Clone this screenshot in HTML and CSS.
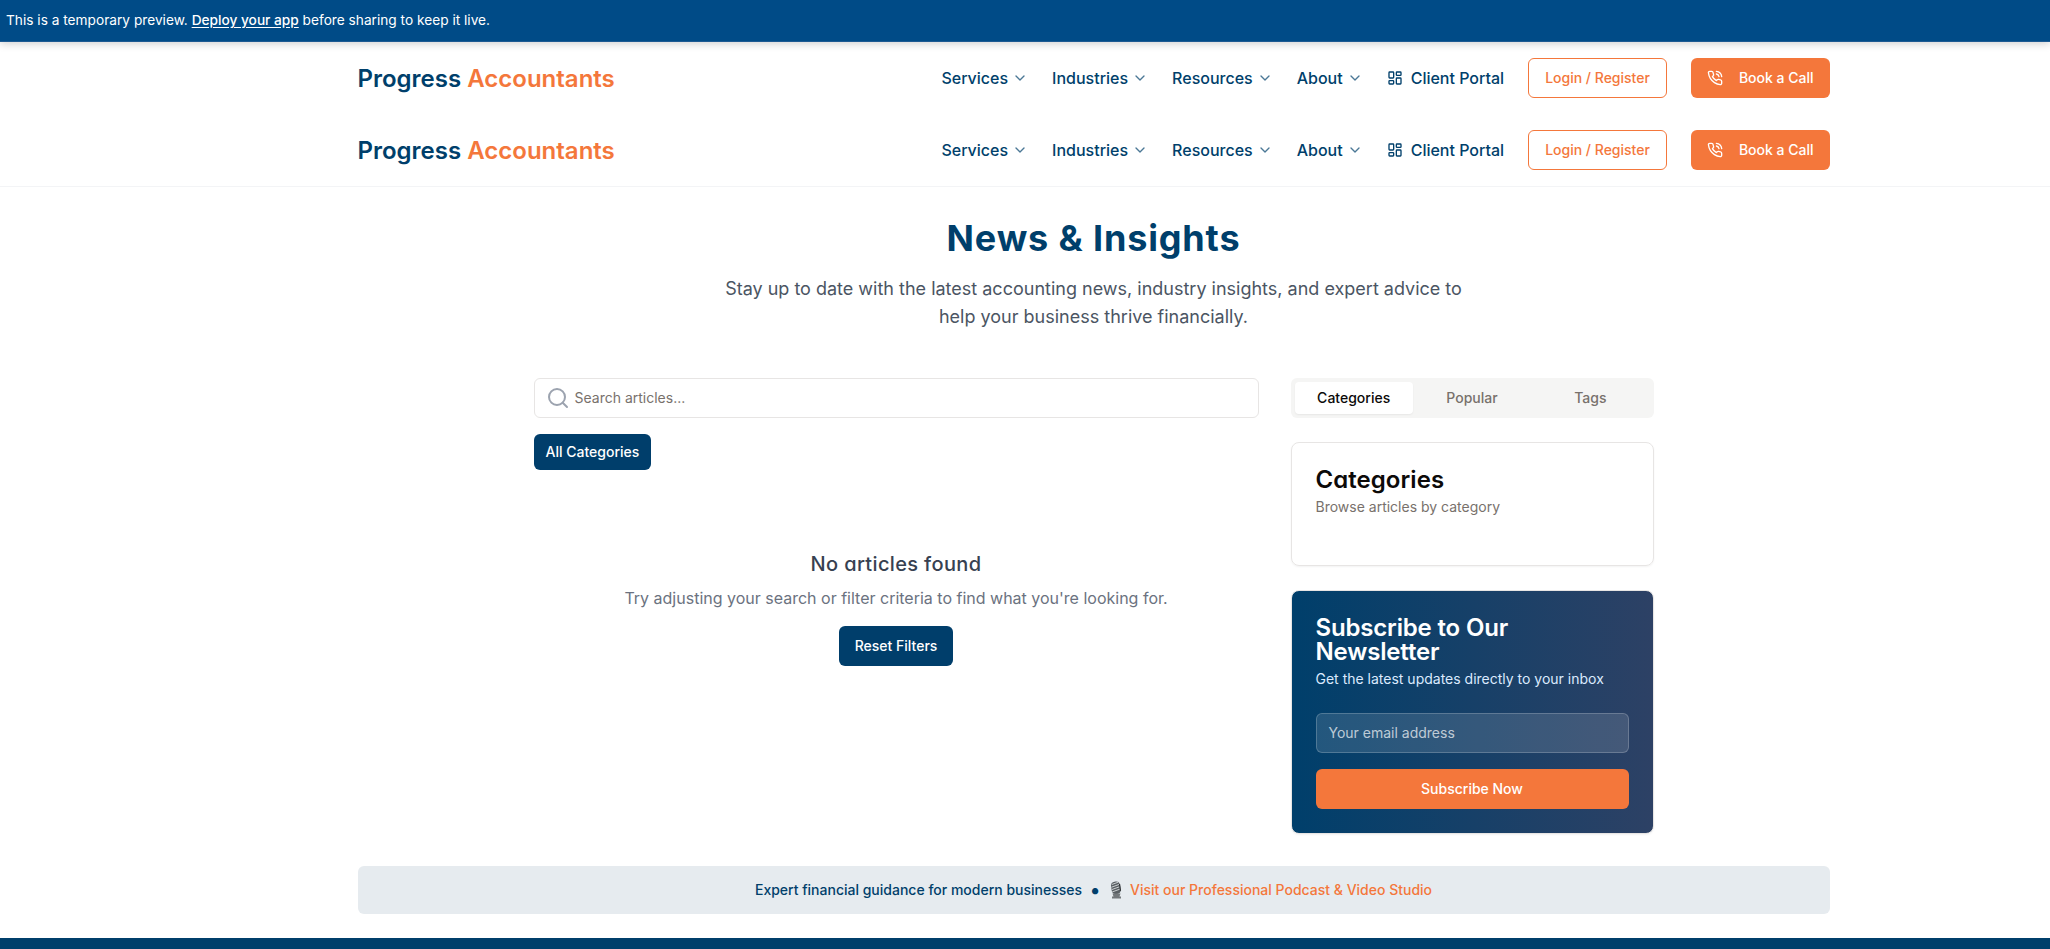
FILE: index.html
```html
<!DOCTYPE html>
<html lang="en">
<head>
<meta charset="utf-8">
<title>News &amp; Insights | Progress Accountants</title>
<link rel="stylesheet" href="styles.css">
</head>
<body>
<svg class="defs" width="0" height="0">
  <symbol id="chevron" viewBox="0 0 24 24"><path d="m6 9 6 6 6-6"/></symbol>
  <symbol id="dashboard" viewBox="0 0 24 24"><rect width="7" height="9" x="3" y="3" rx="1"/><rect width="7" height="5" x="14" y="3" rx="1"/><rect width="7" height="9" x="14" y="12" rx="1"/><rect width="7" height="5" x="3" y="16" rx="1"/></symbol>
  <symbol id="phone" viewBox="0 0 24 24"><path d="M22 16.92v3a2 2 0 0 1-2.18 2 19.79 19.79 0 0 1-8.63-3.07 19.5 19.5 0 0 1-6-6 19.79 19.79 0 0 1-3.07-8.67A2 2 0 0 1 4.11 2h3a2 2 0 0 1 2 1.72 12.84 12.84 0 0 0 .7 2.81 2 2 0 0 1-.45 2.11L8.09 9.91a16 16 0 0 0 6 6l1.27-1.27a2 2 0 0 1 2.11-.45 12.84 12.84 0 0 0 2.81.7A2 2 0 0 1 22 16.92z"/><path d="M14.05 2a9 9 0 0 1 8 7.94"/><path d="M14.05 6A5 5 0 0 1 18 10"/></symbol>
</svg>

<div class="banner">This is a temporary preview.&nbsp;<a>Deploy your app</a>&nbsp;before sharing to keep it live.</div>

<div class="page">
  <header class="header">
    <div class="bar">
      <div class="logo">Progress <span>Accountants</span></div>
      <nav class="nav">
        <a class="nav-item">Services<svg class="icon chev"><use href="#chevron"/></svg></a>
        <a class="nav-item">Industries<svg class="icon chev"><use href="#chevron"/></svg></a>
        <a class="nav-item">Resources<svg class="icon chev"><use href="#chevron"/></svg></a>
        <a class="nav-item">About<svg class="icon chev"><use href="#chevron"/></svg></a>
        <a class="nav-item portal"><svg class="icon"><use href="#dashboard"/></svg>Client Portal</a>
        <a class="btn outline">Login / Register</a>
        <a class="btn orange call"><svg class="icon"><use href="#phone"/></svg>Book a Call</a>
      </nav>
    </div>
  </header>
  <header class="header ruled">
    <div class="bar">
      <div class="logo">Progress <span>Accountants</span></div>
      <nav class="nav">
        <a class="nav-item">Services<svg class="icon chev"><use href="#chevron"/></svg></a>
        <a class="nav-item">Industries<svg class="icon chev"><use href="#chevron"/></svg></a>
        <a class="nav-item">Resources<svg class="icon chev"><use href="#chevron"/></svg></a>
        <a class="nav-item">About<svg class="icon chev"><use href="#chevron"/></svg></a>
        <a class="nav-item portal"><svg class="icon"><use href="#dashboard"/></svg>Client Portal</a>
        <a class="btn outline">Login / Register</a>
        <a class="btn orange call"><svg class="icon"><use href="#phone"/></svg>Book a Call</a>
      </nav>
    </div>
  </header>

  <section class="intro">
    <h1>News &amp; Insights</h1>
    <p>Stay up to date with the latest accounting news, industry insights, and expert advice to<br>help your business thrive financially.</p>
  </section>

  <main class="content">
    <div class="articles">
      <div class="search">
        <svg class="icon search-icon" viewBox="0 0 24 24"><circle cx="11" cy="11" r="8"/><path d="m21 21-4.3-4.3"/></svg>
        <span>Search articles...</span>
      </div>
      <a class="btn navy all">All Categories</a>
      <div class="empty">
        <h3>No articles found</h3>
        <p>Try adjusting your search or filter criteria to find what you're looking for.</p>
        <a class="btn navy">Reset Filters</a>
      </div>
    </div>
    <aside class="side">
      <div class="tabs"><span class="tab active">Categories</span><span class="tab">Popular</span><span class="tab">Tags</span></div>
      <div class="card">
        <h2 class="card-title">Categories</h2>
        <p>Browse articles by category</p>
      </div>
      <div class="card newsletter">
        <h2 class="card-title">Subscribe to Our<br>Newsletter</h2>
        <p>Get the latest updates directly to your inbox</p>
        <div class="email">Your email address</div>
        <a class="btn orange wide">Subscribe Now</a>
      </div>
    </aside>
  </main>

  <div class="strip">
    <span>Expert financial guidance for modern businesses</span>
    <span class="dot">•</span>
    <svg class="mic" viewBox="0 0 14 18"><g transform="rotate(-8 7 8)"><rect x="2.5" y="0.5" width="9" height="12.5" rx="4" fill="#5a6064"/><path d="M3.4 3l7-1.5M2.8 5.6l8.4-1.8M2.8 8l8.4-1.8M2.8 10.4l8.4-1.8" stroke="#d0d4d6" stroke-width="0.9"/><path d="M11.2 3.5v7" stroke="#2f3336" stroke-width="1.2"/></g><path d="M3.5 12.5h8l-1 3h1.5V17.5h-9v-2h1.5z" fill="#73787b"/></svg>
    <a>Visit our Professional Podcast &amp; Video Studio</a>
  </div>
</div>
<footer class="footer"></footer>
</body>
</html>
```
FILE: styles.css
```css
* { box-sizing: border-box; }
body {
  margin: 0;
  height: 949px;
  overflow: hidden;
  display: flex;
  flex-direction: column;
  background: #fff;
  color: #0c0a09;
  font-family: Inter, "Liberation Sans", sans-serif;
  font-size: 14px;
  line-height: 20px;
}
h1, h2, h3, p { margin: 0; }
.defs { display: none; }
.icon {
  width: 16px; height: 16px; flex: none;
  fill: none; stroke: currentColor; stroke-width: 2;
  stroke-linecap: round; stroke-linejoin: round;
}
.banner {
  height: 42px;
  flex: none;
  display: flex;
  align-items: center;
  padding: 0 6px 1px;
  background: #004b87;
  color: #fff;
  font-size: 13.7px;
  border-bottom: 1px solid #1d5a92;
  box-shadow: 0 2px 8px rgba(0,0,0,.18);
  position: relative;
  z-index: 2;
}
.banner a { font-weight: 500; text-decoration: underline; text-underline-offset: 2px; }
.page { padding-left: 137px; flex: none; }
.header { height: 72px; }
.header.ruled { height: 73px; margin-left: -137px; padding-left: 137px; border-bottom: 1px solid #f3f4f6; }
.bar {
  width: 1472px;
  height: 72px;
  margin: 0 auto;
  display: flex;
  align-items: center;
  justify-content: space-between;
}
.logo { padding-top: 2px; font-size: 24px; line-height: 32px; font-weight: 600; color: #003f6b; }
.logo span { color: #f4773b; }
.nav { display: flex; align-items: center; gap: 24px; }
.nav-item { display: flex; align-items: center; font-size: 16px; line-height: 24px; font-weight: 500; color: #003f6b; }
.chev { margin-left: 4px; opacity: .7; }
.portal { gap: 8px; }
.btn {
  display: inline-flex;
  align-items: center;
  justify-content: center;
  height: 40px;
  padding: 0 16px;
  border-radius: 6px;
  font-weight: 500;
}
.outline { border: 1px solid #f4773b; color: #f4773b; background: #fff; }
.orange { background: #f4773b; color: #fff; }
.navy { background: #003e6b; color: #fff; }
.call { gap: 16px; }
.intro { padding-top: 31px; text-align: center; height: 191px; }
.intro h1 {
  font-size: 36px; line-height: 40px; font-weight: 700; color: #003f6b;
  letter-spacing: 0.85px;
  font-feature-settings: "cv11";
}
.intro p { margin-top: 17px; font-size: 18px; line-height: 28px; color: #4b5563; }
.content {
  width: 1120px;
  height: 456px;
  margin: 0 auto;
  display: grid;
  grid-template-columns: 725px 363px;
  gap: 32px;
}
.search {
  height: 40px;
  display: flex;
  align-items: center;
  padding-left: 11px;
  border: 1px solid #e7e5e4;
  border-radius: 6px;
  color: #78716c;
}
.search-icon { width: 24px; height: 24px; color: #9ca3af; margin-right: 5px; }
.all { height: 36px; margin-top: 16px; padding: 0 12px; }
.empty { padding-top: 80px; text-align: center; }
.empty h3 { font-size: 20px; line-height: 28px; font-weight: 500; letter-spacing: 0.35px; color: #374151; font-feature-settings: "cv11"; }
.empty p { margin: 8px 0 16px; font-size: 16px; line-height: 24px; color: #6b7280; }
.side { display: flex; flex-direction: column; gap: 24px; }
.tabs { height: 40px; padding: 4px; display: grid; grid-template-columns: repeat(3, 1fr); background: #f5f5f4; border-radius: 6px; }
.tab { display: flex; align-items: center; justify-content: center; font-weight: 500; color: #78716c; border-radius: 4px; }
.tab.active { background: #fff; color: #0c0a09; box-shadow: 0 1px 2px rgba(0,0,0,.06); }
.card { height: 124px; padding: 25px 24px 23px; border: 1px solid #e7e5e4; border-radius: 8px; box-shadow: 0 1px 2px rgba(0,0,0,.05); }
.card-title { font-size: 24px; line-height: 24px; font-weight: 600; letter-spacing: 0.05px; font-feature-settings: "cv11"; }
.card p { margin-top: 5px; color: #78716c; }
.newsletter { height: 244px; background: linear-gradient(90deg, #003f6b, #2d4165); color: #fff; }
.newsletter .card-title { letter-spacing: -0.17px; }
.card.newsletter p { color: #dbeafe; }
.email {
  height: 40px;
  margin: 24px 0 16px;
  padding: 0 12px;
  display: flex;
  align-items: center;
  border: 1px solid rgba(255,255,255,.2);
  border-radius: 6px;
  background: rgba(255,255,255,.13);
  color: rgba(255,255,255,.7);
}
.wide { display: flex; }
.strip {
  width: 1472px;
  height: 48px;
  margin: 32px auto 24px;
  display: flex;
  align-items: center;
  justify-content: center;
  background: #e6ebef;
  border-radius: 6px;
  font-weight: 500;
  color: #003f6b;
}
.dot { width: 26px; text-align: center; font-size: 20px; }
.mic { width: 14px; height: 18px; margin: 0 7px 0 1px; }
.strip a { color: #f4773b; }
.footer { flex: 1; background: #003f6b; }
```
